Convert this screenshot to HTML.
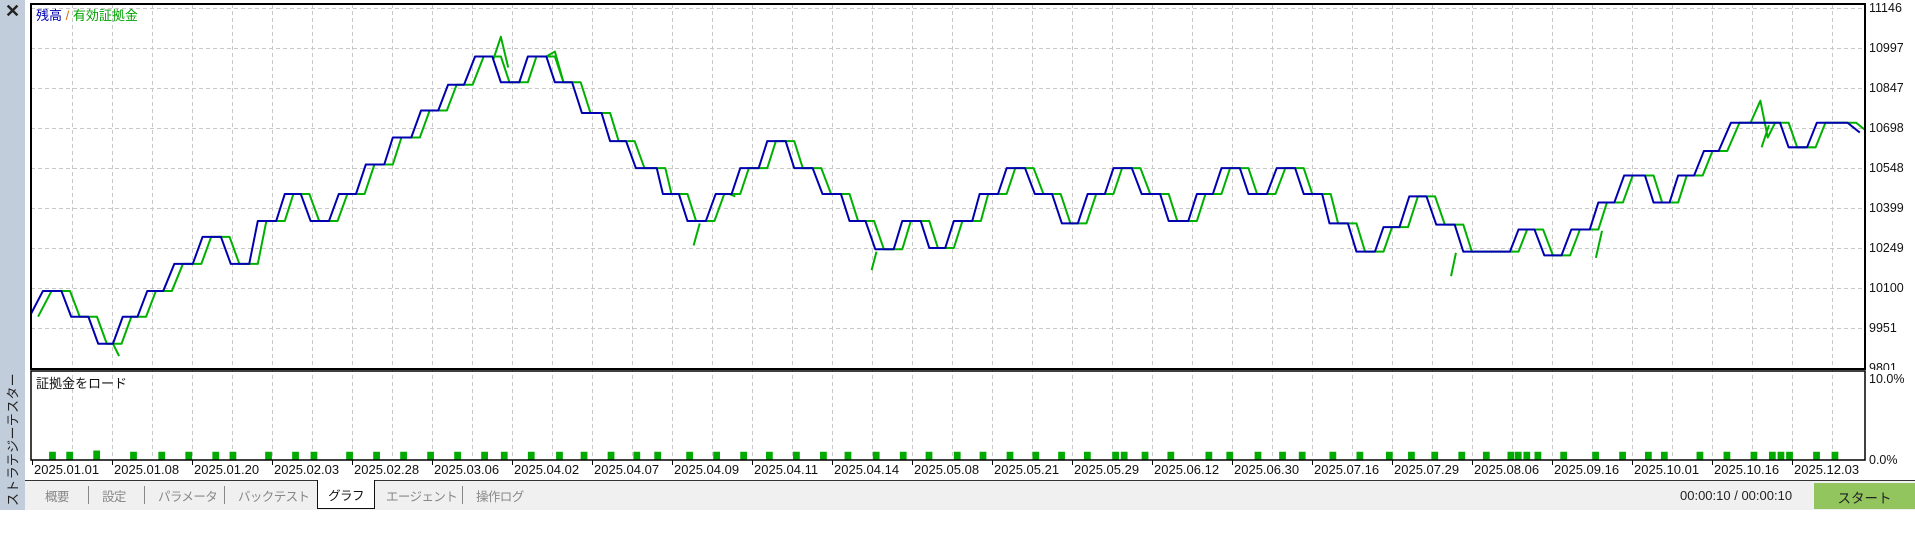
<!DOCTYPE html>
<html><head><meta charset="utf-8">
<style>
*{margin:0;padding:0;box-sizing:border-box}
body{width:1915px;height:510px;overflow:hidden;background:#fff;font-family:"Liberation Sans","Noto Sans CJK JP",sans-serif;position:relative}
.side{position:absolute;left:0;top:0;width:25px;height:510px;background:#c1cdda}
.x{position:absolute;left:5px;top:1px;font-size:18px;font-weight:bold;color:#222}
.vt{position:absolute;left:-88px;top:430px;width:200px;transform:rotate(-90deg);font-size:13px;color:#222;text-align:center;letter-spacing:0.3px}
.ax{position:absolute;left:1869px;font-size:12.5px;color:#111}
.dl{position:absolute;top:462px;font-size:13px;color:#111}
.tabs{position:absolute;left:25px;top:480px;width:1890px;height:30px;background:#f0f0f0;border-top:1px solid #333}
.t{position:absolute;top:5px;font-size:12.5px;letter-spacing:-0.6px;color:#888}
.sep{position:absolute;top:5px;width:1px;height:18px;background:#888}
.sel{position:absolute;left:292px;top:-1px;width:58px;height:29px;background:#fff;border:1px solid #111;border-top:none;font-size:12.5px;letter-spacing:-0.6px;color:#111;text-align:center;padding-top:5px}
.time{position:absolute;left:1680px;top:488px;font-size:13px;color:#222}
.btn{position:absolute;left:1814px;top:483px;width:101px;height:26px;background:#92c55e;font-size:13.5px;color:#222;text-align:center;padding-top:4px}
</style></head><body>
<div class="side"><div class="x">✕</div><div class="vt">ストラテジーテスター</div></div>
<svg width="1915" height="510" style="position:absolute;left:0;top:0">
<defs>
<path id="p" d="M24,258 L35,237 L50,237 L58,258 L72,258 L80,280 L92,280 L100,258 L112,258 L120,237 L133,237 L142,215 L157,215 L165,193 L180,193 L188,215 L203,215 L210,180 L225,180 L232,158 L245,158 L253,180 L268,180 L276,158 L290,158 L298,134 L313,134 L320,112 L335,112 L343,90 L357,90 L365,69 L378,69 L387,46 L401,46 L408,67 L423,67 L430,46 L445,46 L452,67 L466,67 L474,92 L490,92 L497,115 L510,115 L518,137 L535,137 L540,158 L553,158 L560,180 L575,180 L583,158 L596,158 L603,137 L618,137 L625,115 L640,115 L647,137 L662,137 L670,158 L685,158 L692,180 L705,180 L713,203 L728,203 L735,180 L750,180 L757,202 L770,202 L777,180 L792,180 L798,158 L813,158 L820,137 L835,137 L843,158 L857,158 L865,182 L878,182 L886,158 L900,158 L907,137 L922,137 L930,158 L945,158 L952,180 L968,180 L975,158 L988,158 L995,137 L1010,137 L1017,158 L1032,158 L1040,137 L1055,137 L1062,158 L1077,158 L1083,182 L1098,182 L1105,205 L1120,205 L1127,185 L1140,185 L1148,160 L1162,160 L1170,183 L1185,183 L1192,205 L1208,205 L1215,205 L1230,205 L1237,187 L1250,187 L1258,208 L1272,208 L1280,187 L1295,187 L1302,165 L1315,165 L1323,143 L1340,143 L1347,165 L1360,165 L1367,143 L1380,143 L1388,123 L1400,123 L1410,100 L1450,100 L1457,120 L1472,120 L1480,100 L1505,100 L1515,108"/>
</defs>
<g stroke="#c8c8c8" stroke-dasharray="4,3" stroke-width="1">
<line x1="72.5" y1="4" x2="72.5" y2="459"/><line x1="112.5" y1="4" x2="112.5" y2="459"/><line x1="152.5" y1="4" x2="152.5" y2="459"/><line x1="192.5" y1="4" x2="192.5" y2="459"/><line x1="232.5" y1="4" x2="232.5" y2="459"/><line x1="272.5" y1="4" x2="272.5" y2="459"/><line x1="312.5" y1="4" x2="312.5" y2="459"/><line x1="352.5" y1="4" x2="352.5" y2="459"/><line x1="392.5" y1="4" x2="392.5" y2="459"/><line x1="432.5" y1="4" x2="432.5" y2="459"/><line x1="472.5" y1="4" x2="472.5" y2="459"/><line x1="512.5" y1="4" x2="512.5" y2="459"/><line x1="552.5" y1="4" x2="552.5" y2="459"/><line x1="592.5" y1="4" x2="592.5" y2="459"/><line x1="632.5" y1="4" x2="632.5" y2="459"/><line x1="672.5" y1="4" x2="672.5" y2="459"/><line x1="712.5" y1="4" x2="712.5" y2="459"/><line x1="752.5" y1="4" x2="752.5" y2="459"/><line x1="792.5" y1="4" x2="792.5" y2="459"/><line x1="832.5" y1="4" x2="832.5" y2="459"/><line x1="872.5" y1="4" x2="872.5" y2="459"/><line x1="912.5" y1="4" x2="912.5" y2="459"/><line x1="952.5" y1="4" x2="952.5" y2="459"/><line x1="992.5" y1="4" x2="992.5" y2="459"/><line x1="1032.5" y1="4" x2="1032.5" y2="459"/><line x1="1072.5" y1="4" x2="1072.5" y2="459"/><line x1="1112.5" y1="4" x2="1112.5" y2="459"/><line x1="1152.5" y1="4" x2="1152.5" y2="459"/><line x1="1192.5" y1="4" x2="1192.5" y2="459"/><line x1="1232.5" y1="4" x2="1232.5" y2="459"/><line x1="1272.5" y1="4" x2="1272.5" y2="459"/><line x1="1312.5" y1="4" x2="1312.5" y2="459"/><line x1="1352.5" y1="4" x2="1352.5" y2="459"/><line x1="1392.5" y1="4" x2="1392.5" y2="459"/><line x1="1432.5" y1="4" x2="1432.5" y2="459"/><line x1="1472.5" y1="4" x2="1472.5" y2="459"/><line x1="1512.5" y1="4" x2="1512.5" y2="459"/><line x1="1552.5" y1="4" x2="1552.5" y2="459"/><line x1="1592.5" y1="4" x2="1592.5" y2="459"/><line x1="1632.5" y1="4" x2="1632.5" y2="459"/><line x1="1672.5" y1="4" x2="1672.5" y2="459"/><line x1="1712.5" y1="4" x2="1712.5" y2="459"/><line x1="1752.5" y1="4" x2="1752.5" y2="459"/><line x1="1792.5" y1="4" x2="1792.5" y2="459"/><line x1="1832.5" y1="4" x2="1832.5" y2="459"/>
<line x1="31" y1="8.5" x2="1865" y2="8.5"/><line x1="31" y1="48.5" x2="1865" y2="48.5"/><line x1="31" y1="88.5" x2="1865" y2="88.5"/><line x1="31" y1="128.5" x2="1865" y2="128.5"/><line x1="31" y1="168.5" x2="1865" y2="168.5"/><line x1="31" y1="208.5" x2="1865" y2="208.5"/><line x1="31" y1="248.5" x2="1865" y2="248.5"/><line x1="31" y1="288.5" x2="1865" y2="288.5"/><line x1="31" y1="328.5" x2="1865" y2="328.5"/>
</g>
<clipPath id="c"><rect x="31" y="4" width="1834" height="365"/></clipPath>
<g clip-path="url(#c)" fill="none" stroke-width="1.63" stroke-linejoin="round">
<g transform="scale(1.2276)">
<use href="#p" transform="translate(7,0)" stroke="#00b000"/>
<path stroke="#00b000" d="M402,48 L408,30 L414,55 M445,46 L452,42 L459,67 M1426,100 L1434,82 L1440,112 L1446,100 M97,290 L92,280 M570,182 L565,200 M714,205 L710,220 M1186,206 L1182,225 M1305,188 L1300,210 M594,158 L599,160 M1435,120 L1441,102"/>
<use href="#p" stroke="#0000b0"/>
</g></g>
<g fill="#00aa00" transform="scale(1.2276)">
<rect x="40" y="368" width="5.5" height="6.5"/><rect x="54" y="368" width="5.5" height="6.5"/><rect x="76" y="367" width="5.5" height="7.5"/><rect x="106" y="368" width="5.5" height="6.5"/><rect x="129" y="368" width="5.5" height="6.5"/><rect x="151" y="368" width="5.5" height="6.5"/><rect x="173" y="368" width="5.5" height="6.5"/><rect x="187" y="368" width="5.5" height="6.5"/><rect x="216" y="368" width="5.5" height="6.5"/><rect x="238" y="368" width="5.5" height="6.5"/><rect x="253" y="368" width="5.5" height="6.5"/><rect x="282" y="368" width="5.5" height="6.5"/><rect x="304" y="368" width="5.5" height="6.5"/><rect x="326" y="368" width="5.5" height="6.5"/><rect x="348" y="368" width="5.5" height="6.5"/><rect x="370" y="368" width="5.5" height="6.5"/><rect x="392" y="368" width="5.5" height="6.5"/><rect x="408" y="368" width="5.5" height="6.5"/><rect x="430" y="368" width="5.5" height="6.5"/><rect x="453" y="368" width="5.5" height="6.5"/><rect x="473" y="368" width="5.5" height="6.5"/><rect x="495" y="368" width="5.5" height="6.5"/><rect x="516" y="368" width="5.5" height="6.5"/><rect x="533" y="368" width="5.5" height="6.5"/><rect x="559" y="368" width="5.5" height="6.5"/><rect x="581" y="368" width="5.5" height="6.5"/><rect x="603" y="368" width="5.5" height="6.5"/><rect x="624" y="368" width="5.5" height="6.5"/><rect x="646" y="368" width="5.5" height="6.5"/><rect x="668" y="368" width="5.5" height="6.5"/><rect x="688" y="368" width="5.5" height="6.5"/><rect x="711" y="368" width="5.5" height="6.5"/><rect x="733" y="368" width="5.5" height="6.5"/><rect x="754" y="368" width="5.5" height="6.5"/><rect x="777" y="368" width="5.5" height="6.5"/><rect x="798" y="368" width="5.5" height="6.5"/><rect x="820" y="368" width="5.5" height="6.5"/><rect x="841" y="368" width="5.5" height="6.5"/><rect x="862" y="368" width="5.5" height="6.5"/><rect x="883" y="368" width="5.5" height="6.5"/><rect x="906" y="368" width="5.5" height="6.5"/><rect x="913" y="368" width="5.5" height="6.5"/><rect x="930" y="368" width="5.5" height="6.5"/><rect x="951" y="368" width="5.5" height="6.5"/><rect x="982" y="368" width="5.5" height="6.5"/><rect x="999" y="368" width="5.5" height="6.5"/><rect x="1022" y="368" width="5.5" height="6.5"/><rect x="1042" y="368" width="5.5" height="6.5"/><rect x="1058" y="368" width="5.5" height="6.5"/><rect x="1083" y="368" width="5.5" height="6.5"/><rect x="1105" y="368" width="5.5" height="6.5"/><rect x="1129" y="368" width="5.5" height="6.5"/><rect x="1147" y="368" width="5.5" height="6.5"/><rect x="1166" y="368" width="5.5" height="6.5"/><rect x="1188" y="368" width="5.5" height="6.5"/><rect x="1208" y="368" width="5.5" height="6.5"/><rect x="1228" y="368" width="5.5" height="6.5"/><rect x="1234" y="368" width="5.5" height="6.5"/><rect x="1241" y="368" width="5.5" height="6.5"/><rect x="1250" y="368" width="5.5" height="6.5"/><rect x="1271" y="368" width="5.5" height="6.5"/><rect x="1297" y="368" width="5.5" height="6.5"/><rect x="1319" y="368" width="5.5" height="6.5"/><rect x="1340" y="368" width="5.5" height="6.5"/><rect x="1353" y="368" width="5.5" height="6.5"/><rect x="1382" y="368" width="5.5" height="6.5"/><rect x="1404" y="368" width="5.5" height="6.5"/><rect x="1426" y="368" width="5.5" height="6.5"/><rect x="1441" y="368" width="5.5" height="6.5"/><rect x="1448" y="368" width="5.5" height="6.5"/><rect x="1455" y="368" width="5.5" height="6.5"/><rect x="1477" y="368" width="5.5" height="6.5"/><rect x="1492" y="368" width="5.5" height="6.5"/>
</g>
<g fill="none" stroke="#000" stroke-width="2">
<rect x="31" y="4" width="1834" height="365"/>
</g>
<g fill="none" stroke="#000" stroke-width="1.5">
<rect x="31" y="371" width="1834" height="89"/>
</g>
<g stroke="#000" stroke-width="1">
<line x1="32.5" y1="460" x2="32.5" y2="465"/><line x1="112.5" y1="460" x2="112.5" y2="465"/><line x1="192.5" y1="460" x2="192.5" y2="465"/><line x1="272.5" y1="460" x2="272.5" y2="465"/><line x1="352.5" y1="460" x2="352.5" y2="465"/><line x1="432.5" y1="460" x2="432.5" y2="465"/><line x1="512.5" y1="460" x2="512.5" y2="465"/><line x1="592.5" y1="460" x2="592.5" y2="465"/><line x1="672.5" y1="460" x2="672.5" y2="465"/><line x1="752.5" y1="460" x2="752.5" y2="465"/><line x1="832.5" y1="460" x2="832.5" y2="465"/><line x1="912.5" y1="460" x2="912.5" y2="465"/><line x1="992.5" y1="460" x2="992.5" y2="465"/><line x1="1072.5" y1="460" x2="1072.5" y2="465"/><line x1="1152.5" y1="460" x2="1152.5" y2="465"/><line x1="1232.5" y1="460" x2="1232.5" y2="465"/><line x1="1312.5" y1="460" x2="1312.5" y2="465"/><line x1="1392.5" y1="460" x2="1392.5" y2="465"/><line x1="1472.5" y1="460" x2="1472.5" y2="465"/><line x1="1552.5" y1="460" x2="1552.5" y2="465"/><line x1="1632.5" y1="460" x2="1632.5" y2="465"/><line x1="1712.5" y1="460" x2="1712.5" y2="465"/><line x1="1792.5" y1="460" x2="1792.5" y2="465"/>
</g>
</svg>
<div style="position:absolute;left:36px;top:5px;font-size:13px"><span style="color:#0000b0">残高</span> <span style="color:#d07000">/</span> <span style="color:#00a000">有効証拠金</span></div>
<div style="position:absolute;left:36px;top:373px;font-size:13px;color:#111">証拠金をロード</div>
<div class="ax" style="top:1px">11146</div><div class="ax" style="top:41px">10997</div><div class="ax" style="top:81px">10847</div><div class="ax" style="top:121px">10698</div><div class="ax" style="top:161px">10548</div><div class="ax" style="top:201px">10399</div><div class="ax" style="top:241px">10249</div><div class="ax" style="top:281px">10100</div><div class="ax" style="top:321px">9951</div><div class="ax" style="top:361px;height:9px;overflow:hidden">9801</div>
<div class="ax" style="top:372px">10.0%</div><div class="ax" style="top:453px">0.0%</div>
<div class="dl" style="left:34px">2025.01.01</div><div class="dl" style="left:114px">2025.01.08</div><div class="dl" style="left:194px">2025.01.20</div><div class="dl" style="left:274px">2025.02.03</div><div class="dl" style="left:354px">2025.02.28</div><div class="dl" style="left:434px">2025.03.06</div><div class="dl" style="left:514px">2025.04.02</div><div class="dl" style="left:594px">2025.04.07</div><div class="dl" style="left:674px">2025.04.09</div><div class="dl" style="left:754px">2025.04.11</div><div class="dl" style="left:834px">2025.04.14</div><div class="dl" style="left:914px">2025.05.08</div><div class="dl" style="left:994px">2025.05.21</div><div class="dl" style="left:1074px">2025.05.29</div><div class="dl" style="left:1154px">2025.06.12</div><div class="dl" style="left:1234px">2025.06.30</div><div class="dl" style="left:1314px">2025.07.16</div><div class="dl" style="left:1394px">2025.07.29</div><div class="dl" style="left:1474px">2025.08.06</div><div class="dl" style="left:1554px">2025.09.16</div><div class="dl" style="left:1634px">2025.10.01</div><div class="dl" style="left:1714px">2025.10.16</div><div class="dl" style="left:1794px">2025.12.03</div>
<div class="tabs">
<div class="t" style="left:20px">概要</div><div class="sep" style="left:63px"></div>
<div class="t" style="left:77px">設定</div><div class="sep" style="left:119px"></div>
<div class="t" style="left:133px">パラメータ</div><div class="sep" style="left:199px"></div>
<div class="t" style="left:213px">バックテスト</div>
<div class="sel">グラフ</div>
<div class="t" style="left:361px">エージェント</div><div class="sep" style="left:437px"></div>
<div class="t" style="left:451px">操作ログ</div>
</div>
<div class="time">00:00:10 / 00:00:10</div>
<div class="btn">スタート</div>
</body></html>
